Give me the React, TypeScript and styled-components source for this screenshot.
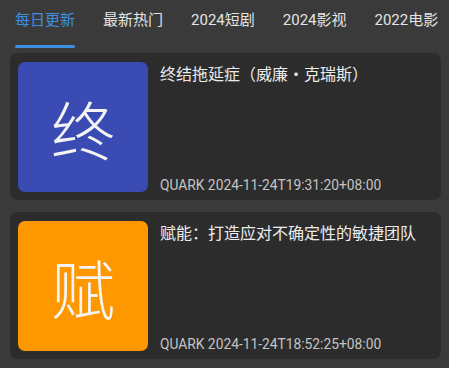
import styled, { createGlobalStyle } from "styled-components";

const GlobalStyle = createGlobalStyle`
  html, body {
    margin: 0;
    padding: 0;
    background: #3a3a3a;
  }
  body {
    font-family: Roboto, "Noto Sans CJK SC", sans-serif;
    overflow: hidden;
  }
`;

const Page = styled.div`
  width: 449px;
  height: 368px;
  background: #3a3a3a;
  overflow: hidden;
`;

const TabBar = styled.div`
  display: flex;
  gap: 28px;
  padding: 10px 0 0 15px;
  white-space: nowrap;
`;

const Tab = styled.div<{ active?: boolean }>`
  position: relative;
  flex-shrink: 0;
  font-size: 15px;
  line-height: 20px;
  height: 38px;
  color: ${(p) => (p.active ? "#3d8fe0" : "#e4e4e4")};

  &::after {
    content: "";
    display: ${(p) => (p.active ? "block" : "none")};
    position: absolute;
    left: 0;
    right: 0;
    bottom: 0;
    height: 3px;
    border-radius: 2px;
    background: #3d8fe0;
  }
`;

const List = styled.div`
  display: flex;
  flex-direction: column;
  gap: 12px;
  padding: 5px 8px 0 10px;
`;

const Card = styled.div`
  display: flex;
  gap: 12px;
  padding: 9px 8px 8px 8px;
  border-radius: 8px;
  background: #2c2c2c;
`;

const Cover = styled.div<{ color: string }>`
  flex-shrink: 0;
  width: 130px;
  height: 130px;
  border-radius: 7px;
  background: ${(p) => p.color};
  display: flex;
  align-items: center;
  justify-content: center;
  color: #f4f4f4;
  font-family: "Noto Sans CJK SC", sans-serif;
  font-weight: 300;
  font-size: 64px;
`;

const Info = styled.div`
  display: flex;
  flex-direction: column;
  justify-content: space-between;
  padding: 0;
  min-width: 0;
`;

const Title = styled.div`
  color: #ececec;
  font-size: 16px;
  line-height: 22px;
  font-family: "Noto Sans CJK SC", sans-serif;
`;

const Meta = styled.div`
  color: #c4c4c4;
  font-size: 13.8px;
  line-height: 18px;
  margin-bottom: -2px;
`;

const tabs = ["每日更新", "最新热门", "2024短剧", "2024影视", "2022电影"];

const items = [
  {
    char: "终",
    color: "#3a4bb3",
    title: "终结拖延症（威廉·克瑞斯）",
    meta: "QUARK 2024-11-24T19:31:20+08:00",
  },
  {
    char: "赋",
    color: "#ff9800",
    title: "赋能：打造应对不确定性的敏捷团队",
    meta: "QUARK 2024-11-24T18:52:25+08:00",
  },
];

const App = () => {
  return (
    <Page>
      <GlobalStyle />
      <TabBar>
        {tabs.map((t, i) => (
          <Tab key={t} active={i === 0}>
            {t}
          </Tab>
        ))}
      </TabBar>
      <List>
        {items.map((item) => (
          <Card key={item.meta}>
            <Cover color={item.color}>{item.char}</Cover>
            <Info>
              <Title>{item.title}</Title>
              <Meta>{item.meta}</Meta>
            </Info>
          </Card>
        ))}
      </List>
    </Page>
  );
};

export default App;
